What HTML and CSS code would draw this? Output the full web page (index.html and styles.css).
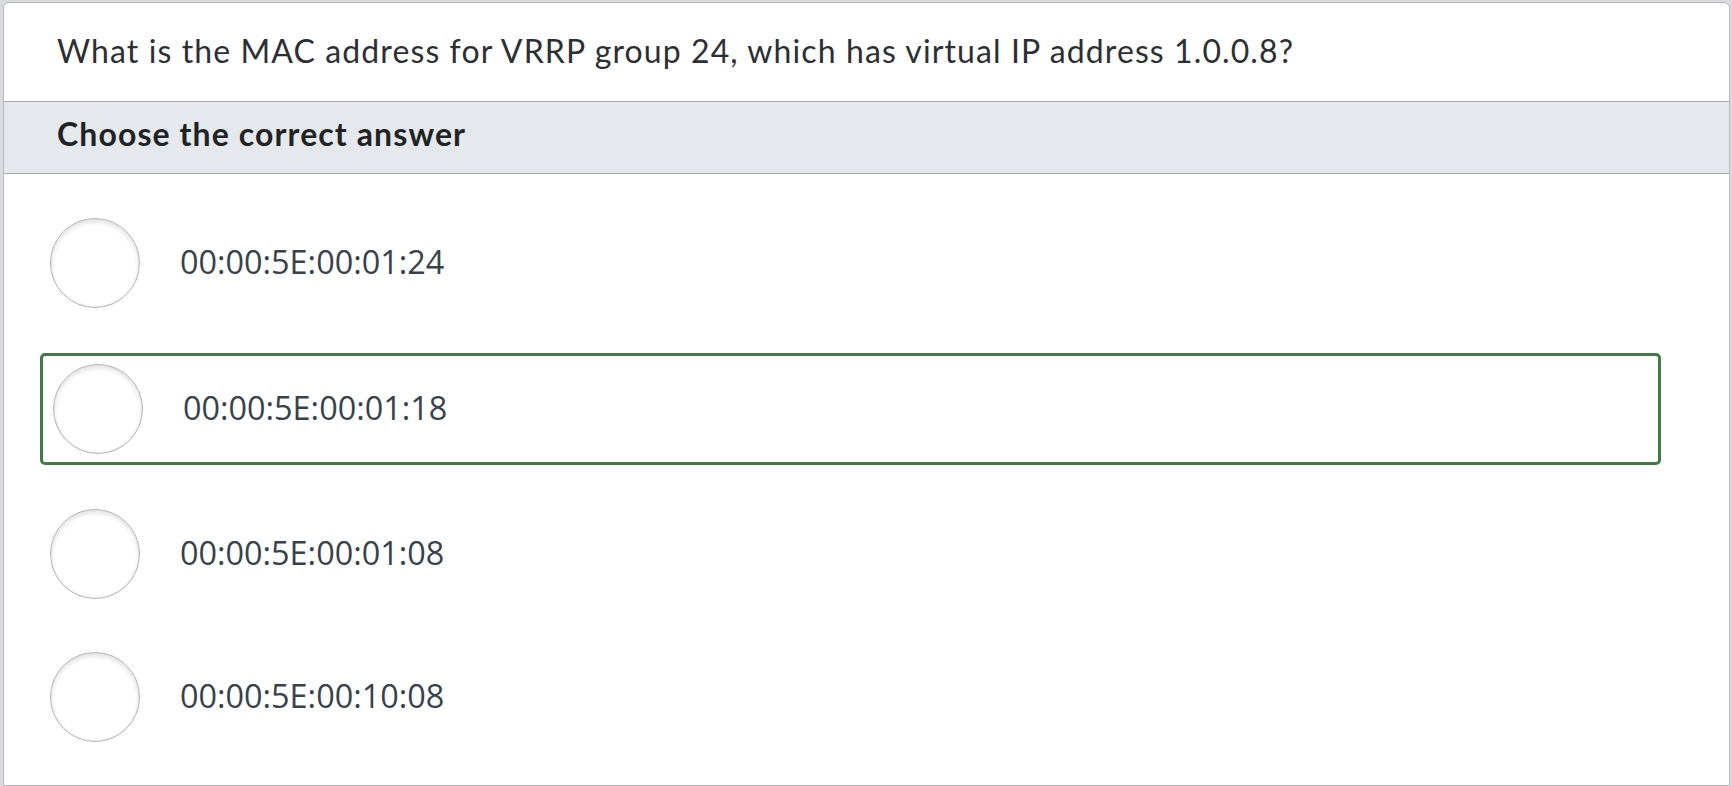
FILE: index.html
```html
<!DOCTYPE html>
<html lang="en">
<head>
<meta charset="utf-8">
<title>Question</title>
<link rel="stylesheet" href="styles.css">
</head>
<body>
<div class="card">
  <div class="question">What is the MAC address for VRRP group 24, which has virtual IP address 1.0.0.8?</div>
  <div class="prompt">Choose the correct answer</div>
  <div class="options">
    <div class="option">
      <span class="radio"></span>
      <span class="label">00:00:5E:00:01:24</span>
    </div>
    <div class="option selected">
      <span class="radio"></span>
      <span class="label">00:00:5E:00:01:18</span>
    </div>
    <div class="option">
      <span class="radio"></span>
      <span class="label">00:00:5E:00:01:08</span>
    </div>
    <div class="option last">
      <span class="radio"></span>
      <span class="label">00:00:5E:00:10:08</span>
    </div>
  </div>
</div>
</body>
</html>
```

FILE: styles.css
```css
html, body {
  margin: 0;
  padding: 0;
}
body {
  background: #d9dbde;
  width: 1732px;
  height: 786px;
  overflow: hidden;
  padding: 2px 2px 0 3px;
  box-sizing: border-box;
}
.card {
  background: #ffffff;
  border: 1px solid #b7b8ba;
  border-radius: 6px 6px 0 0;
  height: 784px;
  box-sizing: border-box;
  overflow: hidden;
}
.question {
  height: 99px;
  display: flex;
  align-items: center;
  padding: 0 0 4px 53px;
  font-family: Lato, "Liberation Sans", sans-serif;
  font-size: 32px;
  letter-spacing: 1.1px;
  color: #2c2f33;
  border-bottom: 1px solid #a9abae;
  box-sizing: border-box;
}
.prompt {
  height: 72px;
  display: flex;
  align-items: center;
  padding: 0 0 9px 53px;
  background: #e5e8ec;
  border-bottom: 1px solid #a9abae;
  box-sizing: border-box;
  font-family: Lato, "Liberation Sans", sans-serif;
  font-weight: 700;
  font-size: 32px;
  letter-spacing: 1.1px;
  color: #1f2326;
}
.options {
  padding-top: 33px;
  display: flex;
  flex-direction: column;
  gap: 33.5px;
}
.option {
  display: flex;
  align-items: center;
  height: 112px;
  box-sizing: border-box;
  margin: 0 68px 0 33px;
  padding-left: 10px;
  border: 3px solid transparent;
  border-radius: 5px;
}
.option.selected {
  margin-left: 36px;
  border-color: #437b47;
}
.option.last {
  margin-top: -3px;
}
.radio {
  width: 90px;
  height: 90px;
  flex: none;
  border-radius: 50%;
  border: 1px solid #b3b3b3;
  box-sizing: border-box;
  background: #ffffff;
  box-shadow: inset 0 3px 5px rgba(0, 0, 0, 0.12), inset 0 -1px 2px rgba(0, 0, 0, 0.05);
}
.label {
  margin-left: 40px;
  padding-bottom: 4px;
  font-family: "Open Sans", "Liberation Sans", sans-serif;
  font-size: 32.4px;
  color: #38424c;
}
```
